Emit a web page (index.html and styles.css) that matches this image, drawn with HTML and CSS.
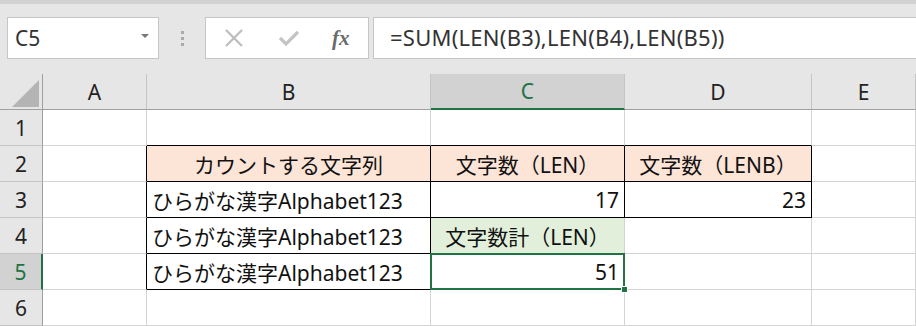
FILE: index.html
```html
<!DOCTYPE html>
<html lang="ja">
<head>
    <meta charset="UTF-8">
    <meta name="viewport" content="width=device-width, initial-scale=1.0">
    <title>LEN関数</title>
    <link rel="stylesheet" href="styles.css">
</head>
<body>
    <div class="toolbar">
        <div class="name-box">
            <span>C5</span>
            <span class="drop"></span>
        </div>
        <div class="grip"><i></i><i></i><i></i></div>
        <div class="fx-buttons">
            <svg class="icon" width="20" height="18" viewBox="0 0 20 18">
                <path d="M2 1 L18 17 M18 1 L2 17" stroke="#bdbdbd" stroke-width="2.2" fill="none"/>
            </svg>
            <svg class="icon" width="20" height="18" viewBox="0 0 20 18">
                <path d="M1 9 L7 15 L19 3" stroke="#c4c4c4" stroke-width="3.2" fill="none"/>
            </svg>
            <span class="fx">fx</span>
        </div>
        <div class="formula">=SUM(LEN(B3),LEN(B4),LEN(B5))</div>
    </div>

    <div class="sheet">
        <!-- column headers -->
        <div class="hd corner"><span class="tri"></span></div>
        <div class="hd">A</div>
        <div class="hd">B</div>
        <div class="hd active-col">C</div>
        <div class="hd">D</div>
        <div class="hd">E</div>

        <!-- row 1 -->
        <div class="rh">1</div>
        <div class="cell"></div>
        <div class="cell bb"></div>
        <div class="cell bb"></div>
        <div class="cell bb"></div>
        <div class="cell"></div>

        <!-- row 2 -->
        <div class="rh">2</div>
        <div class="cell br"></div>
        <div class="cell orange center br bb">カウントする文字列</div>
        <div class="cell orange center br bb">文字数（LEN）</div>
        <div class="cell orange center br bb">文字数（LENB）</div>
        <div class="cell"></div>

        <!-- row 3 -->
        <div class="rh">3</div>
        <div class="cell br"></div>
        <div class="cell br bb">ひらがな漢字Alphabet123</div>
        <div class="cell num br bb">17</div>
        <div class="cell num br bb">23</div>
        <div class="cell"></div>

        <!-- row 4 -->
        <div class="rh">4</div>
        <div class="cell br"></div>
        <div class="cell br bb">ひらがな漢字Alphabet123</div>
        <div class="cell green center">文字数計（LEN）</div>
        <div class="cell"></div>
        <div class="cell"></div>

        <!-- row 5 -->
        <div class="rh active-row">5</div>
        <div class="cell br"></div>
        <div class="cell br bb">ひらがな漢字Alphabet123</div>
        <div class="cell num selected">51<span class="handle"></span></div>
        <div class="cell"></div>
        <div class="cell"></div>

        <!-- row 6 -->
        <div class="rh">6</div>
        <div class="cell"></div>
        <div class="cell"></div>
        <div class="cell"></div>
        <div class="cell"></div>
        <div class="cell"></div>
    </div>
</body>
</html>
```

FILE: styles.css
```css
* {
    box-sizing: border-box;
}
body {
    margin: 0;
    width: 916px;
    height: 326px;
    overflow: hidden;
    background-color: #e6e6e6;
    font-family: "Noto Sans", "Noto Sans CJK JP", sans-serif;
    color: #111;
}

/* formula bar */
.toolbar {
    height: 74px;
    display: flex;
    align-items: flex-start;
    padding: 17px 0 0 7px;
    border-top: 4px solid #d2d2d2;
    background-color: #e6e6e6;
}
.name-box {
    width: 152px;
    height: 42px;
    margin-top: -4px;
    background-color: #fff;
    border: 1px solid #c6c6c6;
    display: flex;
    align-items: center;
    justify-content: space-between;
    padding: 0 9px 0 7px;
    font-size: 21px;
    color: #333;
}
.drop {
    width: 0;
    height: 0;
    border-left: 4px solid transparent;
    border-right: 4px solid transparent;
    border-top: 4px solid #777;
    margin-top: -4px;
}
.grip {
    width: 46px;
    height: 42px;
    margin-top: -4px;
    display: flex;
    flex-direction: column;
    align-items: center;
    justify-content: center;
    gap: 3px;
}
.grip i {
    display: block;
    width: 3px;
    height: 3px;
    background-color: #aaa;
}
.fx-buttons {
    width: 164px;
    height: 42px;
    margin-top: -4px;
    background-color: #fff;
    border: 1px solid #c6c6c6;
    display: flex;
    align-items: center;
    padding-left: 18px;
    gap: 35px;
}
.fx {
    font-family: "Liberation Serif", serif;
    font-style: italic;
    font-weight: bold;
    font-size: 21px;
    color: #6a6a6a;
    margin-left: -2px;
}
.formula {
    flex: 1;
    height: 42px;
    margin-top: -4px;
    margin-left: 4px;
    background-color: #fff;
    border: 1px solid #c6c6c6;
    border-right: none;
    padding-left: 16px;
    font-size: 22px;
    letter-spacing: 0.25px;
    line-height: 39px;
    color: #333;
}

/* grid */
.sheet {
    display: grid;
    grid-template-columns: 43px 104px 284px 194px 187px 104px;
    grid-template-rows: 36px repeat(6, 36px);
    background-color: #fff;
}
.hd {
    background-color: #e6e6e6;
    border-right: 1px solid #c4c4c4;
    border-bottom: 1px solid #9f9f9f;
    display: flex;
    align-items: center;
    justify-content: center;
    font-size: 21px;
    color: #222;
}
.corner {
    position: relative;
    border-right-color: #9f9f9f;
}
.tri {
    position: absolute;
    right: 3px;
    bottom: 2px;
    width: 0;
    height: 0;
    border-left: 27px solid transparent;
    border-bottom: 27px solid #b4b4b4;
}
.active-col {
    background-color: #d2d2d2;
    color: #217346;
    border-bottom: 2px solid #217346;
}
.rh {
    background-color: #e6e6e6;
    border-right: 1px solid #9f9f9f;
    border-bottom: 1px solid #c4c4c4;
    display: flex;
    align-items: center;
    justify-content: center;
    font-size: 21px;
    color: #222;
}
.active-row {
    background-color: #d2d2d2;
    color: #217346;
    border-right: 2px solid #217346;
}
.cell {
    border-right: 1px solid #d4d4d4;
    border-bottom: 1px solid #d4d4d4;
    display: flex;
    align-items: center;
    padding: 0 5px;
    font-size: 21px;
    white-space: nowrap;
}
.center {
    justify-content: center;
}
.num {
    justify-content: flex-end;
}
.bb {
    border-bottom-color: #000;
}
.br {
    border-right-color: #000;
}
.orange {
    background-color: #fce4d6;
}
.green {
    background-color: #e2efda;
}
.selected {
    position: relative;
}
.selected::after {
    content: "";
    position: absolute;
    left: -1px;
    top: -1px;
    right: -1px;
    bottom: -1px;
    border: 2px solid #217346;
}
.handle {
    position: absolute;
    right: -4px;
    bottom: -4px;
    width: 7px;
    height: 7px;
    background-color: #217346;
    border: 1px solid #fff;
    z-index: 1;
}
```
